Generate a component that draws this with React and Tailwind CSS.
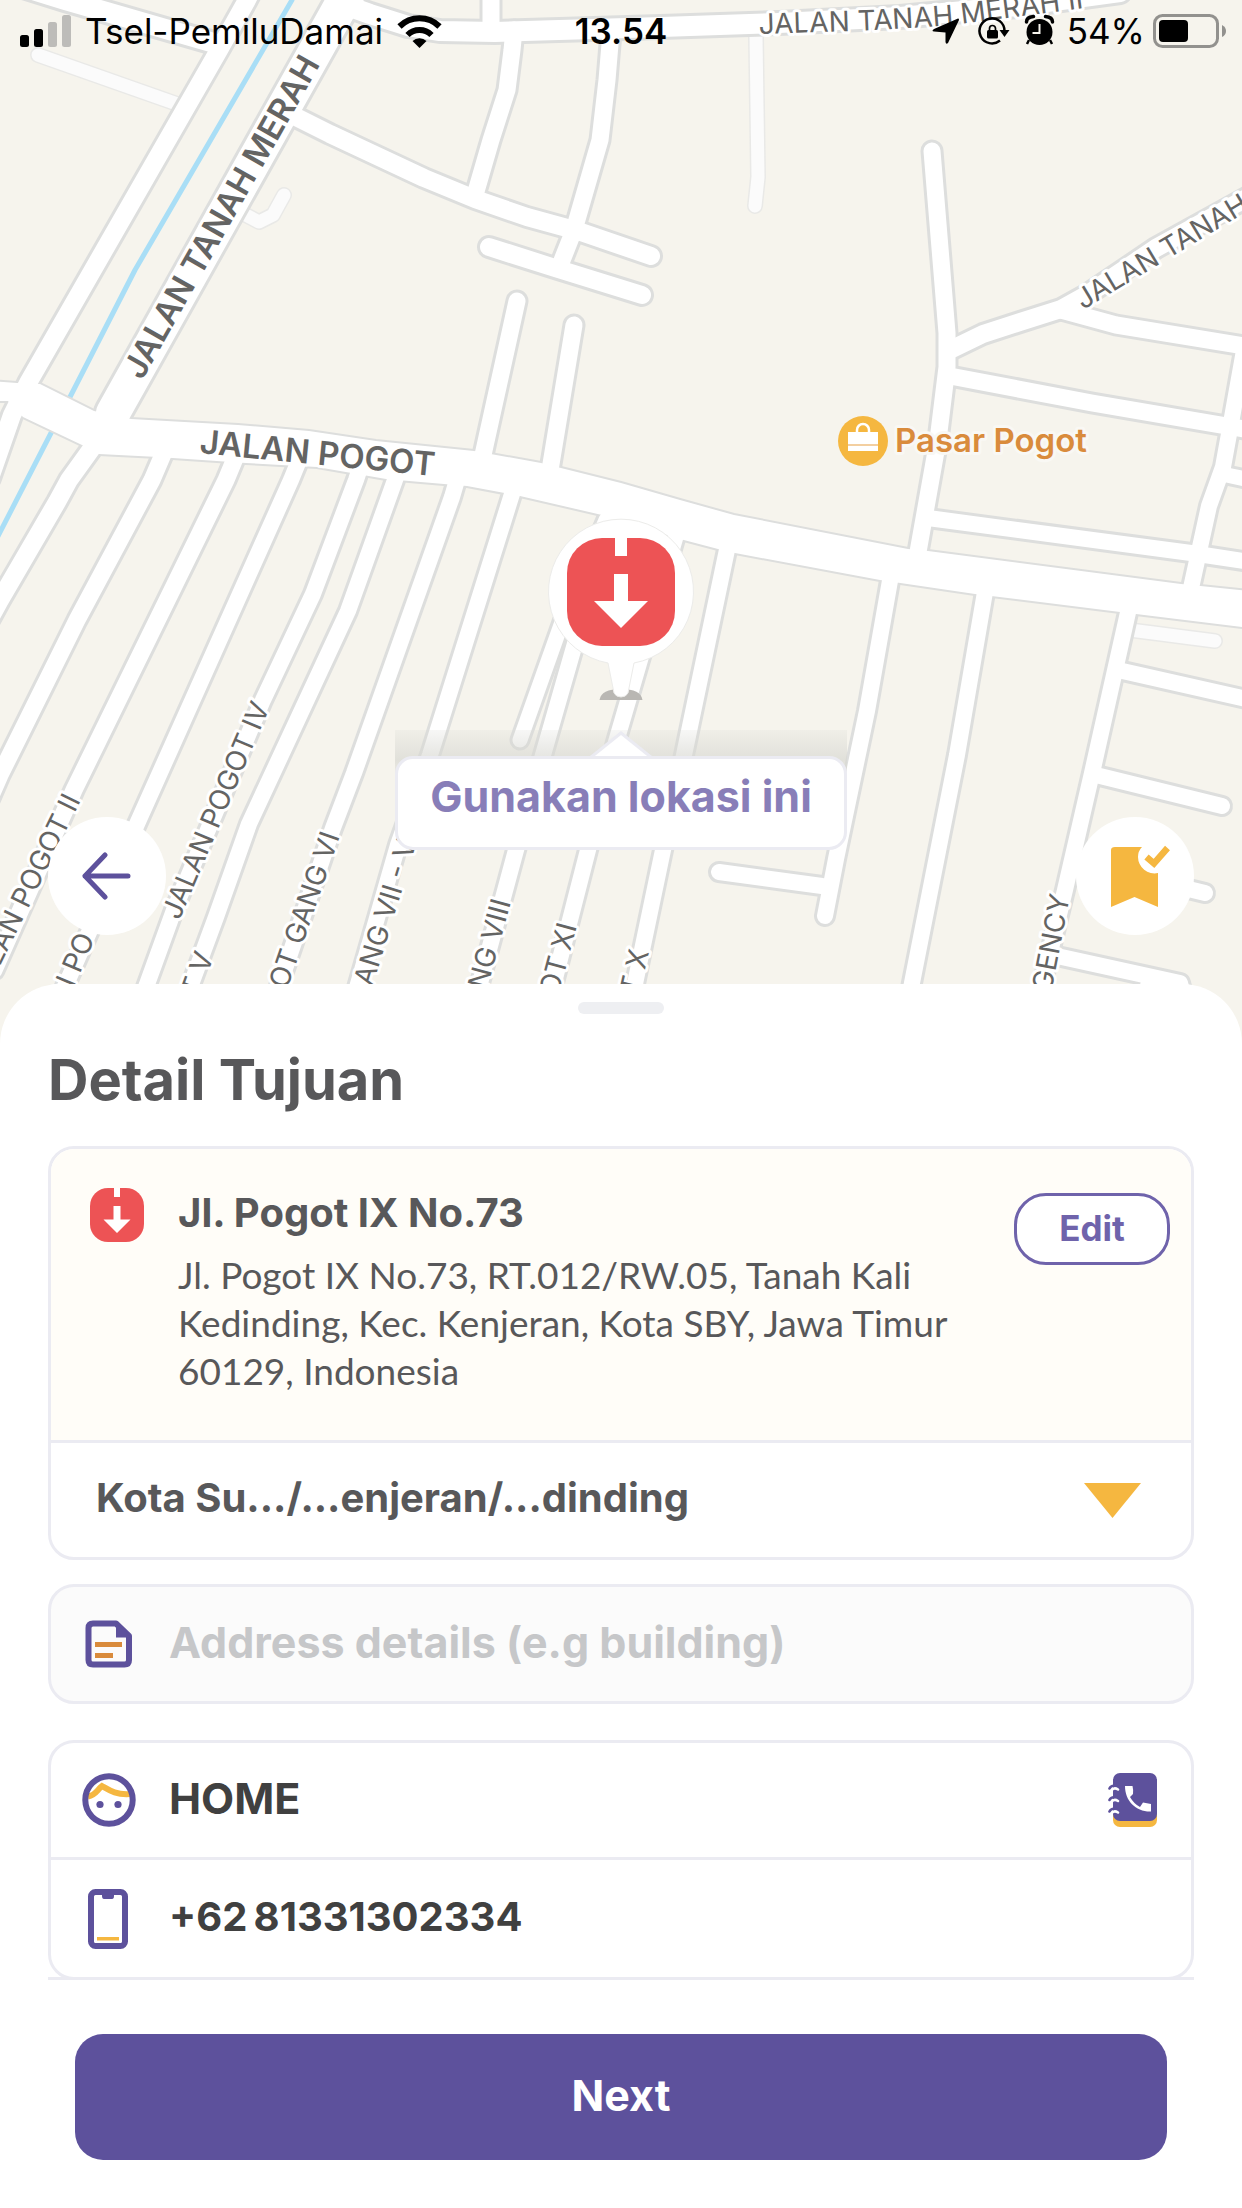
import React from "react";

const ROADS = [
  // canal-side road and upper left
  { d: "M250 -6L247 0L219 50L28 383L12 415L-10 478", w: 18 },
  { d: "M20 -14L65 0L214 43", w: 20 },
  { d: "M350 -10L344 0L113 413", w: 34 },
  { d: "M345 5L370 14L408 26L440 31L495 32L661 27L779 23L900 17L1017 6L1120 -8", w: 20 },
  { d: "M491 -6L491 32", w: 17 },
  { d: "M514 30L512 50L507 90L491 140L475 195", w: 17 },
  { d: "M611 32L607 80L600 140L574 230L559 268", w: 17 },
  { d: "M290 114L330 134L424 178L475 199L527 217L578 231L651 256", w: 18 },
  { d: "M489 247L555 268L642 295", w: 18 },
  { d: "M517 301L483 455", w: 17 },
  { d: "M574 325L550 470", w: 17 },
  // gangs below Jalan Pogot
  { d: "M92 448L69 480L57 502L0 600L-12 622", w: 18 },
  { d: "M164 452L152 480L77 620L0 775L-10 798", w: 17 },
  { d: "M236 456L226 480L74 790L-6 970", w: 17 },
  { d: "M300 458L291 480L137 824L60 998", w: 16 },
  { d: "M362 462L356 480L313 594L263 700L174 910L142 998", w: 16 },
  { d: "M400 465L395 480L348 611L249 824L216 917L186 998", w: 16 },
  { d: "M457 480L452 497L354 773L333 828L275 998", w: 16 },
  { d: "M516 482L512 494L430 755L398 845L354 998", w: 16 },
  { d: "M614 512L606 520L562 622L520 740", w: 15 },
  { d: "M622 512L612 535L576 640L543 755L516 850L476 998", w: 16 },
  { d: "M676 535L640 660L616 742L588 850L550 998", w: 16 },
  { d: "M728 545L684 755L663 850L632 998", w: 16 },
  { d: "M891 575L867 711L836 859L825 916", w: 16 },
  { d: "M822 886L719 872", w: 16 },
  { d: "M985 592L957 755L909 998", w: 16 },
  { d: "M1129 608L1092 773L1065 890L1039 998", w: 16 },
  { d: "M1118 670L1260 702", w: 16 },
  { d: "M1100 776L1222 806", w: 16 },
  { d: "M1085 864L1205 893", w: 16 },
  { d: "M1057 956L1180 983L1184 998", w: 16 },
  { d: "M1150 978L1145 998", w: 16 },
  // right side
  { d: "M932 151L947 333L947 367L938 440L918 552", w: 17 },
  { d: "M950 350L983 334L1020 322L1061 309L1088 294L1156 248L1250 196", w: 18 },
  { d: "M1061 310L1116 325L1250 347", w: 17 },
  { d: "M950 376L1092 403L1250 430", w: 17 },
  { d: "M1245 345L1231 423L1223 467L1209 506L1191 588", w: 16 },
  { d: "M1222 474L1250 480", w: 15 },
  { d: "M928 518L1191 553L1250 562", w: 16 },
];

const POGOT =
  "M-8 381L17 383L40 384L94 411L131 419L238 425L309 431L376 441L474 451L541 463L621 483L680 500L734 515L908 549L928 551L1181 584L1250 591L1250 628L1136 614L975 594L880 580L735 553L718 549L680 539L602 515L520 496L467 486L386 479L317 467L246 463L158 457L99 454L82 445L23 417L8 401L-8 401Z";

const LANES = [
  "M38 55L180 105",
  "M242 213L259 222L273 215L284 195",
  "M756 37L758 177L755 206",
  "M1130 630L1215 641",
];

const LABELS = [
  { x: 142, y: 381, a: -60.6, t: "JALAN TANAH MERAH", s: 33, b: 600 },
  { x: 199, y: 453, a: 5.6, t: "JALAN POGOT", s: 33, b: 600 },
  { x: 1083, y: 310, a: -31, t: "JALAN TANAH MERAH", s: 28 },
  { x: 270, y: 707, a: -67, t: "JALAN POGOT IV", s: 28, end: true },
  { x: 81, y: 800, a: -64, t: "JALAN POGOT II", s: 28, end: true },
  { x: 95, y: 938, a: -67, t: "JALAN PO", s: 28, end: true },
  { x: 214, y: 956, a: -70, t: "POGOT V", s: 28, end: true },
  { x: 340, y: 836, a: -71, t: "POGOT GANG VI", s: 28, end: true },
  { x: 421, y: 828, a: -73, t: "GANG VII - VII", s: 28, end: true },
  { x: 511, y: 902, a: -74.6, t: "GANG VIII", s: 28, end: true },
  { x: 577, y: 926, a: -75, t: "POGOT XI", s: 28, end: true },
  { x: 649, y: 952, a: -77, t: "POGOT X", s: 28, end: true },
  { x: 1070, y: 896, a: -79, t: "REGENCY", s: 28, end: true },
];

function MapView() {
  return (
    <svg viewBox="0 0 1242 1060" className="block h-auto w-full" role="img" aria-label="Map around Jalan Pogot">
      <rect width="1242" height="1060" fill="#f6f4ed" />
      <g fill="none" strokeLinejoin="round" strokeLinecap="round">
        <path d="M292 0L135 270L70 397L51 433L-4 540" stroke="#a9def6" strokeWidth="5" />
        {LANES.map((d) => (
          <path key={d} d={d} stroke="#e9e9e7" strokeWidth="16" />
        ))}
        {LANES.map((d) => (
          <path key={d} d={d} stroke="#fbfbfb" strokeWidth="13" />
        ))}
        {ROADS.map((r) => (
          <path key={r.d} d={r.d} stroke="#dddedd" strokeWidth={r.w + 6} />
        ))}
        <path d={POGOT} stroke="#dddedd" strokeWidth="4" fill="#fff" />
        {ROADS.map((r) => (
          <path key={r.d} d={r.d} stroke="#fff" strokeWidth={r.w} />
        ))}
        <path d={POGOT} fill="#fff" />
      </g>
      <g fontFamily="Inter, sans-serif" fill="#646463" stroke="#fff" strokeWidth="6" strokeLinejoin="round" paintOrder="stroke">
        <path id="merah2" d="M759 34L848 31Q905 29 952 25L1100 6" fill="none" stroke="none" />
        <text fontSize="28">
          <textPath href="#merah2">JALAN TANAH MERAH II</textPath>
        </text>
        {LABELS.map((l) => (
          <text
            key={l.t + l.x}
            fontSize={l.s}
            fontWeight={l.b || 400}
            textAnchor={l.end ? "end" : "start"}
            transform={`translate(${l.x} ${l.y}) rotate(${l.a})`}
          >
            {l.t}
          </text>
        ))}
        <text x="895" y="452" fontSize="33" fontWeight="600" fill="#d98b3c" stroke="#f9f8f4">
          Pasar Pogot
        </text>
      </g>
      <circle cx="863" cy="441" r="25" fill="#f5b740" />
      <path d="M848 432h30v19h-30z" fill="#fff" />
      <path d="M848 444h30v2h-30z" fill="#f3cfa0" />
      <path d="M857 432v-2a6 6 0 0 1 12 0v2" fill="none" stroke="#fff" strokeWidth="2.5" />
    </svg>
  );
}

function DropMark({ className }) {
  return (
    <svg viewBox="0 0 54 54" className={className} aria-hidden="true">
      <rect width="54" height="54" rx="18" fill="#ed5355" />
      <path d="M24 0h6v9h-6z" fill="#fff" />
      <path d="M23.500 18h7v13.500H40.500L27 45 13.500 31.500h10z" fill="#fff" />
    </svg>
  );
}

function StatusBar() {
  return (
    <div className="absolute inset-x-0 top-0 grid grid-cols-[1fr_auto_1fr] items-center px-4 pt-2 text-[35px] leading-[46px] text-black">
      <div className="flex items-center gap-3.5 pl-1">
        <svg width="51" height="32" viewBox="0 0 51 32" aria-hidden="true">
          <rect x="0" y="20" width="9" height="12" rx="2.500" />
          <rect x="14" y="14" width="9" height="18" rx="2.500" />
          <rect x="28" y="7" width="9" height="25" rx="2.500" fill="#bdbcb9" />
          <rect x="42" y="0" width="9" height="32" rx="2.500" fill="#bdbcb9" />
        </svg>
        <span>Tsel-PemiluDamai</span>
        <svg width="45" height="33" viewBox="0 0 45 33" aria-hidden="true">
          <path d="M22.500 33L15.500 26a10 10 0 0 1 14 0z" />
          <path d="M10.500 20a17 17 0 0 1 24 0M2.500 11.500a28.500 28.500 0 0 1 40 0" fill="none" stroke="#000" strokeWidth="6" />
        </svg>
      </div>
      <span className="font-semibold">13.54</span>
      <div className="flex items-center justify-end">
        <svg width="130" height="34" viewBox="930 14 130 34" aria-hidden="true">
          <path d="M959 18.500Q960 18 960 20L949 43Q947 45 946.500 42V32.500L935 31.500Q932 31 935 29z" />
          <path d="M1001 40.500A12.500 12.500 0 1 1 1005.500 31" fill="none" stroke="#000" strokeWidth="2.500" />
          <path d="M1000.500 30h10l-5 7z" />
          <rect x="988" y="30" width="11" height="8.500" rx="1.500" />
          <path d="M990.500 31v-2.500a3 3 0 0 1 6 0V31" fill="none" stroke="#000" strokeWidth="1.700" />
          <circle cx="1040.500" cy="32" r="13" />
          <path d="M1030 40l-2 4M1051 40l2 4" stroke="#000" strokeWidth="2.500" />
          <path d="M1027.500 22q0-5 7-5.500M1053.500 22q0-5-7-5.500" fill="none" stroke="#000" strokeWidth="3.500" strokeLinecap="round" />
          <path d="M1040.500 24v9h-7" fill="none" stroke="#f6f4ed" strokeWidth="2" />
        </svg>
        <span className="ml-2">54%</span>
        <svg className="ml-2" width="73" height="34" viewBox="0 0 73 34" aria-hidden="true">
          <rect x="1.500" y="1.500" width="63" height="31" rx="8" fill="none" stroke="#92918e" strokeWidth="3" />
          <rect x="6" y="6" width="29" height="22" rx="4" />
          <path d="M69 11q4 2 4 6t-4 6z" fill="#92918e" />
        </svg>
      </div>
    </div>
  );
}

function LocationPin() {
  return (
    <div className="absolute inset-x-0 bottom-[210px] flex flex-col items-center">
      <svg width="150" height="184" viewBox="546 518 150 184" aria-hidden="true">
        <path d="M599.500 701Q601 690 621 690T642.500 701z" fill="#b9b7b3" />
        <path
          d="M608 664A72.500 72.500 0 1 1 634 664L628 694Q626 698 621 698T614 694z"
          fill="#fff"
          stroke="#ececea"
          strokeWidth="1"
        />
        <rect x="567" y="539" width="108" height="108" rx="35" fill="#ed5355" />
        <path d="M615 539h12v18h-12zM614 575h14v27h20l-27 27-27-27h20z" fill="#fff" />
      </svg>
      <button type="button" className="mt-[29px] flex flex-col items-center bg-gradient-to-b from-[#d8d8d2]/20 to-transparent to-50% via-[#d8d8d2]/70 via-25%">
        <svg className="-mb-[3px] h-[29px] w-[66px]" viewBox="0 0 66 29" aria-hidden="true">
          <path d="M2 29L33 3l31 26z" fill="#fff" />
          <path d="M2 28L33 3l31 25" fill="none" stroke="#ebebf2" strokeWidth="3" />
        </svg>
        <span className="block rounded-[18px] border-[3px] border-[#ebebf2] bg-white px-8 pt-2 pb-[22px] text-[43px] leading-[58px] font-bold text-[#887eb8]">
          Gunakan lokasi ini
        </span>
      </button>
    </div>
  );
}

function DocIcon() {
  return (
    <svg width="48" height="48" viewBox="0 0 48 48" aria-hidden="true">
      <path d="M3.500 8q0-4.500 4.500-4.500H31L44 16v24q0 4.500-4.500 4.500H8q-4.500 0-4.500-4.500z" fill="none" stroke="#5d519c" strokeWidth="6" strokeLinejoin="round" />
      <path d="M31 2v15.500h15z" fill="#5d519c" />
      <path d="M10 22h27v5H10zM10 33h18v5H10z" fill="#d98b3c" />
    </svg>
  );
}

function FaceIcon() {
  return (
    <svg width="54" height="54" viewBox="0 0 54 54" aria-hidden="true">
      <path d="M6 23.500C14 22 15 17 20 13c7 4 14 9 28 8" fill="none" stroke="#f5b740" strokeWidth="6" />
      <circle cx="27" cy="27" r="23.700" fill="none" stroke="#5d519c" strokeWidth="6" />
      <circle cx="18" cy="31.500" r="3.600" fill="#5d519c" />
      <circle cx="36" cy="31.500" r="3.600" fill="#5d519c" />
    </svg>
  );
}

function PhoneIcon() {
  return (
    <svg width="40" height="60" viewBox="0 0 40 60" aria-hidden="true">
      <rect x="3" y="3" width="34" height="54" rx="4.500" fill="none" stroke="#5d519c" strokeWidth="6" />
      <path d="M14 4h12v3q0 3-2 3h-8q-2 0-2-3z" fill="#5d519c" />
      <path d="M9 48h22v3.500H9z" fill="#f5b740" />
    </svg>
  );
}

function ContactsIcon() {
  return (
    <svg width="49" height="54" viewBox="0 0 49 54" aria-hidden="true">
      <rect x="5" y="10" width="44" height="44" rx="7" fill="#f5b740" />
      <rect x="5" y="0" width="44" height="48" rx="7" fill="#5d519c" />
      {[14, 25.5, 37].map((y) => (
        <g key={y} fill="none" strokeLinecap="round" strokeWidth="2.600">
          <path d={`M1.500 ${y + 1.5}Q3 ${y - 2} 8 ${y - 1}`} stroke="#5d519c" />
          <path d={`M3.500 ${y + 3.500}Q6 ${y} 10 ${y + 2.500}`} stroke="#fff" />
        </g>
      ))}
      <path d="M17 13h7.500q1 4 .5 8l-3 3Q26 31 32 34l3-4.500 8 1.500v7.500C28 39 17 28 17 13z" fill="#fff" />
    </svg>
  );
}

const field = "min-w-0 flex-1 bg-transparent pb-1 leading-[56px] font-bold outline-none";

export default function App() {
  return (
    <main className="min-h-screen bg-white font-['Inter',sans-serif]">
      <div className="relative">
        <MapView />
        <StatusBar />
        <LocationPin />
        <div className="absolute inset-x-0 bottom-[125px] flex justify-between px-12">
          <button type="button" aria-label="Back" className="flex size-[118px] items-center justify-center rounded-full bg-white">
            <svg width="50" height="50" viewBox="0 0 50 50" fill="none" stroke="#5d519c" strokeWidth="5" strokeLinecap="round" strokeLinejoin="round" aria-hidden="true">
              <path d="M46 25H3M23 4L3 25l20 21" />
            </svg>
          </button>
          <button type="button" aria-label="Saved places" className="flex size-[118px] items-center justify-center rounded-full bg-white pl-3">
            <svg width="60" height="62" viewBox="0 0 60 62" aria-hidden="true">
              <path d="M0 5q0-3 4-3H31Q27 6 27 12A16.500 16.500 0 0 0 47 28V62L23.500 52 0 62z" fill="#f5b740" />
              <path d="M35.500 12l7.500 6.500L56.500 3" fill="none" stroke="#f5b740" strokeWidth="6.500" />
            </svg>
          </button>
        </div>
      </div>

      <section className="relative -mt-[76px] rounded-t-[60px] bg-white px-12 pt-[18px] pb-12">
        <div className="mx-auto h-3 w-[86px] rounded-full bg-[#eeeff2]" />
        <h1 className="mt-[34px] text-[56px] leading-[64px] font-bold text-[#58585a]">Detail Tujuan</h1>

        <div className="mt-[34px] overflow-hidden rounded-[26px] border-[3px] border-[#ebebf2]">
          <div className="flex items-start border-b-[3px] border-[#ebebf2] bg-[#fffdf8] pt-9 pr-[21px] pb-[45px] pl-[39px]">
            <DropMark className="mt-[3px] size-[54px] shrink-0" />
            <div className="ml-[34px] min-w-0 flex-1 text-[#58585a]">
              <h2 className="text-[40px] leading-[56px] font-bold">Jl. Pogot IX No.73</h2>
              <p className="mt-2.5 max-w-[800px] font-['Lato',sans-serif] text-[37px] leading-[48px]">
                Jl. Pogot IX No.73, RT.012/RW.05, Tanah Kali Kedinding, Kec. Kenjeran, Kota SBY, Jawa Timur 60129, Indonesia
              </p>
            </div>
            <button type="button" className="mt-2 h-[72px] w-[156px] shrink-0 rounded-[32px] border-[3px] border-[#6f63ab] bg-white pb-0.5 text-[35px] leading-none font-bold text-[#6f63ab]">
              Edit
            </button>
          </div>
          <div className="flex h-[114px] items-center pr-[50px] pl-[45px]">
            <select aria-label="District" className={`${field} appearance-none text-[40px] text-[#58585a]`}>
              <option>Kota Su.../...enjeran/...dinding</option>
            </select>
            <svg width="57" height="35" viewBox="0 0 57 35" className="pointer-events-none" aria-hidden="true">
              <path d="M0 0h57L28.500 35z" fill="#f5b740" />
            </svg>
          </div>
        </div>

        <label className="mt-6 flex h-[120px] items-center rounded-[26px] border-[3px] border-[#ebebf2] bg-[#fbfbfb] pr-8 pl-[34px]">
          <DocIcon />
          <input type="text" aria-label="Address details" placeholder="Address details (e.g building)" className={`${field} ml-9 text-[43px] text-[#404040] placeholder:text-[#c6c7c9] placeholder:opacity-100`} />
        </label>

        <div className="mt-9 border-b-[3px] border-[#ebebf2]">
          <div className="-mb-[3px] rounded-[26px] border-[3px] border-[#ebebf2]">
            <div className="flex h-[117px] items-center border-b-[3px] border-[#ebebf2] pr-[34px] pl-[31px]">
              <FaceIcon />
              <input type="text" aria-label="Recipient name" defaultValue="HOME" className={`${field} ml-[33px] text-[43px] text-[#404040]`} />
              <button type="button" aria-label="Choose from contacts">
                <ContactsIcon />
              </button>
            </div>
            <div className="flex h-[117px] items-center pr-[33px] pl-[37px]">
              <PhoneIcon />
              <input type="tel" aria-label="Phone number" defaultValue={"+62\u200981331302334"} className={`${field} ml-[41px] text-[40px] text-[#404040]`} />
            </div>
          </div>
        </div>

        <div className="px-[27px] pt-[54px]">
          <button type="button" className="h-[126px] w-full rounded-[28px] bg-[#5d519c] pb-1 text-[43px] font-bold text-white">
            Next
          </button>
        </div>
      </section>
    </main>
  );
}
